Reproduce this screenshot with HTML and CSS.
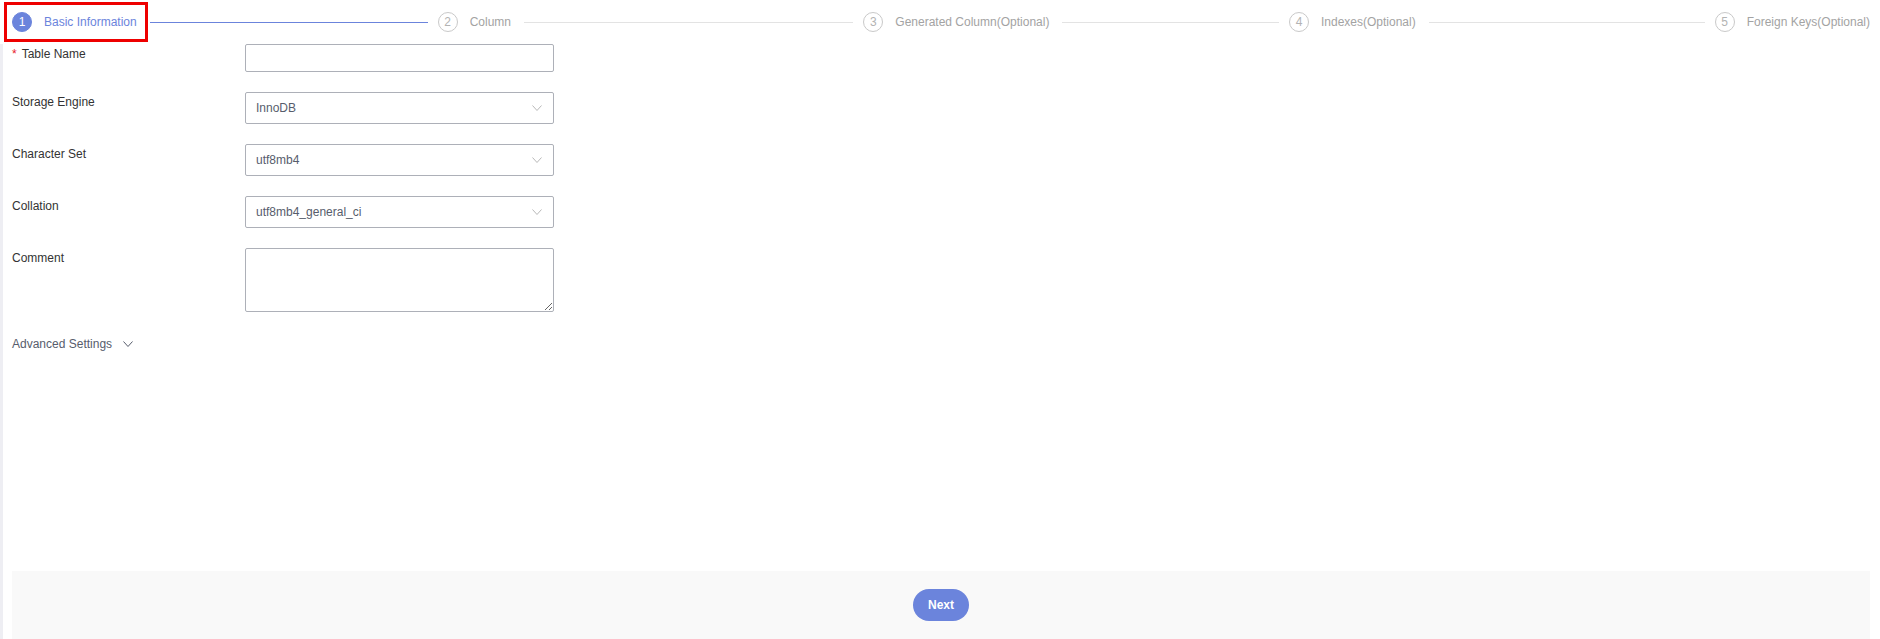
FILE: index.html
```html
<!DOCTYPE html>
<html lang="en">
<head>
    <meta charset="UTF-8">
    <meta name="viewport" content="width=device-width, initial-scale=1.0">
    <title>Create Table</title>
    <link rel="stylesheet" href="styles.css">
</head>
<body>
    <div class="page">
        <!-- wizard steps -->
        <div class="steps">
            <div class="step active">
                <div class="step-head marked">
                    <span class="step-num">1</span>
                    <span class="step-title">Basic Information</span>
                </div>
                <div class="step-line"></div>
            </div>
            <div class="step">
                <div class="step-head">
                    <span class="step-num">2</span>
                    <span class="step-title">Column</span>
                </div>
                <div class="step-line"></div>
            </div>
            <div class="step">
                <div class="step-head">
                    <span class="step-num">3</span>
                    <span class="step-title">Generated Column(Optional)</span>
                </div>
                <div class="step-line"></div>
            </div>
            <div class="step">
                <div class="step-head">
                    <span class="step-num">4</span>
                    <span class="step-title">Indexes(Optional)</span>
                </div>
                <div class="step-line"></div>
            </div>
            <div class="step">
                <div class="step-head">
                    <span class="step-num">5</span>
                    <span class="step-title">Foreign Keys(Optional)</span>
                </div>
            </div>
        </div>

        <div class="content">
            <form class="form" id="tableForm">
                <div class="form-row">
                    <label class="form-label required" for="tableName">Table Name</label>
                    <input class="text-input" type="text" id="tableName">
                </div>
                <div class="form-row">
                    <label class="form-label">Storage Engine</label>
                    <div class="select">
                        <span>InnoDB</span>
                        <svg width="10" height="6" viewBox="0 0 10 6"><path d="M0.5 0.5L5 5.5L9.5 0.5" fill="none" stroke="#b8b8b8" stroke-width="1"/></svg>
                    </div>
                </div>
                <div class="form-row">
                    <label class="form-label">Character Set</label>
                    <div class="select">
                        <span>utf8mb4</span>
                        <svg width="10" height="6" viewBox="0 0 10 6"><path d="M0.5 0.5L5 5.5L9.5 0.5" fill="none" stroke="#b8b8b8" stroke-width="1"/></svg>
                    </div>
                </div>
                <div class="form-row">
                    <label class="form-label">Collation</label>
                    <div class="select">
                        <span>utf8mb4_general_ci</span>
                        <svg width="10" height="6" viewBox="0 0 10 6"><path d="M0.5 0.5L5 5.5L9.5 0.5" fill="none" stroke="#b8b8b8" stroke-width="1"/></svg>
                    </div>
                </div>
                <div class="form-row">
                    <label class="form-label" for="comment">Comment</label>
                    <textarea class="text-area" id="comment"></textarea>
                </div>
            </form>

            <div class="advanced">
                <span>Advanced Settings</span>
                <svg width="10" height="6" viewBox="0 0 10 6"><path d="M0.5 0.5L5 5.5L9.5 0.5" fill="none" stroke="#575d6c" stroke-width="1"/></svg>
            </div>

            <div class="footer">
                <button class="btn-next" type="button">Next</button>
            </div>
        </div>
    </div>
</body>
</html>
```

FILE: styles.css
```css
html, body {
    margin: 0;
    padding: 0;
}
body {
    font-family: "Liberation Sans", Arial, sans-serif;
    font-size: 12px;
    color: #333;
    background-color: #fff;
}
.page {
    height: 639px;
    box-sizing: border-box;
    padding-right: 10px;
    display: flex;
    flex-direction: column;
}

/* steps */
.steps {
    display: flex;
    align-items: center;
    height: 44px;
    padding-left: 12px;
}
.step {
    flex: 1;
    display: flex;
    align-items: center;
}
.step:last-child {
    flex: none;
}
.step-head {
    display: flex;
    align-items: center;
    position: relative;
}
.step-num {
    width: 20px;
    height: 20px;
    box-sizing: border-box;
    border-radius: 50%;
    border: 1px solid #c9c9c9;
    color: #b3b3b3;
    display: flex;
    align-items: center;
    justify-content: center;
    font-size: 12px;
}
.step-title {
    margin-left: 12px;
    color: #a3a3a3;
    white-space: nowrap;
}
.step-line {
    flex: 1;
    height: 1px;
    background-color: #e3e3e3;
    margin: 0 10px 0 13px;
}
.step.active .step-num {
    background-color: #6b84dc;
    border-color: #6b84dc;
    color: #fff;
}
.step.active .step-title {
    color: #6b84dc;
}
.step.active .step-line {
    background-color: #6b84dc;
}
/* red highlight frame drawn over the current step */
.step-head.marked::after {
    content: "";
    position: absolute;
    left: -8px;
    right: -11px;
    top: -10px;
    bottom: -10px;
    border: 3px solid #ee0000;
}

.content {
    flex: 1;
    display: flex;
    flex-direction: column;
    border-left: 3px solid #eeeef3;
    padding-left: 9px;
}

/* form */
.form {
    display: flex;
    flex-direction: column;
    gap: 20px;
}
.form-row {
    display: flex;
    align-items: flex-start;
}
.form-label {
    width: 233px;
    line-height: 20px;
    color: #333;
}
.form-label.required::before {
    content: "*";
    color: #e8202a;
    margin-right: 5px;
}
.text-input,
.select,
.text-area {
    width: 309px;
    box-sizing: border-box;
    border: 1px solid #adb0b8;
    border-radius: 2px;
    background-color: #fff;
    font-family: inherit;
    font-size: 12px;
    color: #575d6c;
}
.text-input {
    height: 28px;
    padding: 0 10px;
}
.select {
    height: 32px;
    padding: 0 11px 0 10px;
    display: flex;
    align-items: center;
    justify-content: space-between;
}
.text-area {
    height: 64px;
    padding: 4px 10px;
    resize: vertical;
    display: block;
}

.advanced {
    margin-top: 22px;
    line-height: 20px;
    color: #575d6c;
    display: flex;
    align-items: center;
    gap: 11px;
}

/* footer */
.footer {
    margin-top: auto;
    height: 68px;
    background-color: #f9f9f9;
    display: flex;
    align-items: center;
    justify-content: center;
}
.btn-next {
    width: 56px;
    height: 32px;
    border: none;
    border-radius: 16px;
    background-color: #6b84dc;
    color: #fff;
    font-family: inherit;
    font-size: 12px;
    font-weight: bold;
    cursor: pointer;
}
.btn-next:hover {
    background-color: #7f95e3;
}
```
